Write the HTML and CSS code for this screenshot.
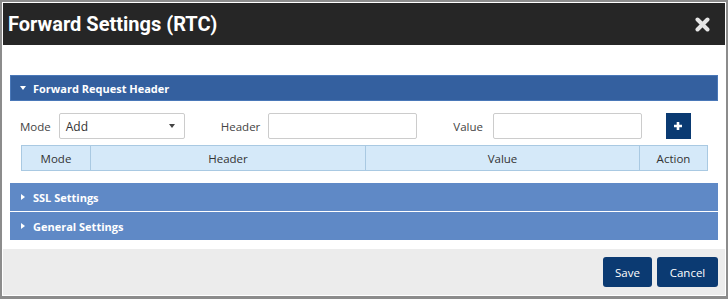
FILE: index.html
```html
<!DOCTYPE html>
<html lang="en">

<head>
    <meta charset="UTF-8">
    <meta name="viewport" content="width=device-width, initial-scale=1.0">
    <title>Forward Settings (RTC)</title>
    <link rel="stylesheet" href="styles.css">
</head>

<body>
    <div class="dialog">
        <div class="dialog-head">
            <h1>Forward Settings (RTC)</h1>
            <div class="close-btn">
                <svg width="15" height="15" viewBox="0 0 15 15">
                    <path d="M2.5 2.5 L12.5 12.5 M12.5 2.5 L2.5 12.5" stroke="#e6e6e6" stroke-width="4" stroke-linecap="round" />
                </svg>
            </div>
        </div>

        <div class="dialog-body">
            <div class="panel">
                <div class="panel-title open"><span class="caret down"></span>Forward Request Header</div>
                <div class="panel-content">
                    <div class="form-row">
                        <label class="lbl-mode">Mode</label>
                        <div class="select">Add<span class="select-arrow"></span></div>
                        <label class="lbl-header">Header</label>
                        <div class="input"></div>
                        <label class="lbl-value">Value</label>
                        <div class="input"></div>
                        <div class="add-btn">
                            <svg width="10" height="10" viewBox="0 0 10 10">
                                <path d="M5 1 V9 M1 5 H9" stroke="#fff" stroke-width="2.6" />
                            </svg>
                        </div>
                    </div>
                    <table class="grid">
                        <tr>
                            <th class="c-mode">Mode</th>
                            <th class="c-header">Header</th>
                            <th class="c-value">Value</th>
                            <th class="c-action">Action</th>
                        </tr>
                    </table>
                </div>
            </div>

            <div class="panel-title closed first"><span class="caret right"></span>SSL Settings</div>
            <div class="panel-title closed"><span class="caret right"></span>General Settings</div>
        </div>

        <div class="dialog-foot">
            <button class="btn save">Save</button>
            <button class="btn cancel">Cancel</button>
        </div>
    </div>
</body>

</html>
```

FILE: styles.css
```css
html,
body {
    margin: 0;
    padding: 0;
    background: #fff;
}

body {
    font-family: "Open Sans", "Noto Sans", sans-serif;
    color: #333;
}

.dialog {
    box-sizing: border-box;
    width: 728px;
    height: 299px;
    border: 2px solid #8c8c8c;
    border-bottom-width: 3px;
    background: #fff;
    display: flex;
    flex-direction: column;
}

.dialog-head {
    height: 42px;
    margin: 1px 1px 0 1px;
    background: #262626;
    display: flex;
    align-items: center;
    justify-content: space-between;
    padding: 0 15px 0 5px;
}

.dialog-head h1 {
    margin: 0;
    font-family: Roboto, "Liberation Sans", sans-serif;
    font-weight: 700;
    font-size: 20px;
    color: #fff;
}

.close-btn {
    width: 15px;
    height: 15px;
    display: flex;
}

.dialog-body {
    flex: 1;
    padding: 30px 8px 0 8px;
}

.panel-title {
    display: flex;
    align-items: center;
    padding-left: 10px;
    font-size: 11px;
    font-weight: 700;
    color: #fff;
}

.panel-title.open {
    box-sizing: border-box;
    height: 26px;
    background: #34609f;
    border: 1px solid #4a78b8;
    padding-left: 9px;
}

.panel-title.closed {
    background: #5f89c6;
    height: 28px;
}

.panel-title.first {
    margin-bottom: 1px;
}

.caret {
    display: inline-block;
    width: 0;
    height: 0;
    margin-right: 7px;
}

.caret.down {
    border-left: 3.5px solid transparent;
    border-right: 3.5px solid transparent;
    border-top: 4px solid #fff;
}

.caret.right {
    border-top: 3.5px solid transparent;
    border-bottom: 3.5px solid transparent;
    border-left: 4px solid #fff;
    margin-left: 1px;
    margin-right: 8px;
}

.panel-content {
    padding: 12px 10px 12px 11px;
}

.form-row {
    display: flex;
    align-items: center;
    height: 26px;
    margin-left: -1px;
}

.form-row label {
    font-size: 11.5px;
    color: #444;
}

.lbl-mode {
    margin-right: 8px;
}

.select,
.input {
    box-sizing: border-box;
    height: 26px;
    border: 1px solid #ccc;
    border-radius: 2px;
    background: #fff;
}

.select {
    width: 126px;
    display: flex;
    align-items: center;
    justify-content: space-between;
    padding: 0 9px 0 6px;
    font-size: 12px;
    color: #333;
}

.select-arrow {
    width: 0;
    height: 0;
    border-left: 3.5px solid transparent;
    border-right: 3.5px solid transparent;
    border-top: 4px solid #444;
}

.input {
    width: 149px;
}

.lbl-header {
    margin-left: 36px;
    margin-right: 8px;
}

.lbl-value {
    margin-left: 36px;
    margin-right: 10px;
}

.add-btn {
    width: 25px;
    height: 26px;
    margin-left: 24px;
    background: #0a3a72;
    display: flex;
    align-items: center;
    justify-content: center;
}

.grid {
    margin-top: 6px;
    width: 687px;
    border-collapse: collapse;
}

.grid th {
    height: 24px;
    padding: 0;
    background: #d5e9f9;
    border: 1px solid #a9c9e2;
    font-size: 11.5px;
    font-weight: 400;
    color: #333;
}

.c-mode {
    width: 68px;
}

.c-header {
    width: 274px;
}

.c-value {
    width: 273px;
}

.dialog-foot {
    height: 46px;
    margin: 0 1px 1px 1px;
    background: #ececec;
    display: flex;
    justify-content: flex-end;
    align-items: flex-start;
    padding: 8px 7px 0 0;
    box-sizing: border-box;
    gap: 5px;
}

.btn {
    height: 30px;
    padding: 0;
    border: none;
    border-radius: 3px;
    background: #0b3a72;
    color: #fff;
    font-family: "Open Sans", "Noto Sans", sans-serif;
    font-size: 11.5px;
}

.btn.save {
    width: 49px;
}

.btn.cancel {
    width: 61px;
}
```
